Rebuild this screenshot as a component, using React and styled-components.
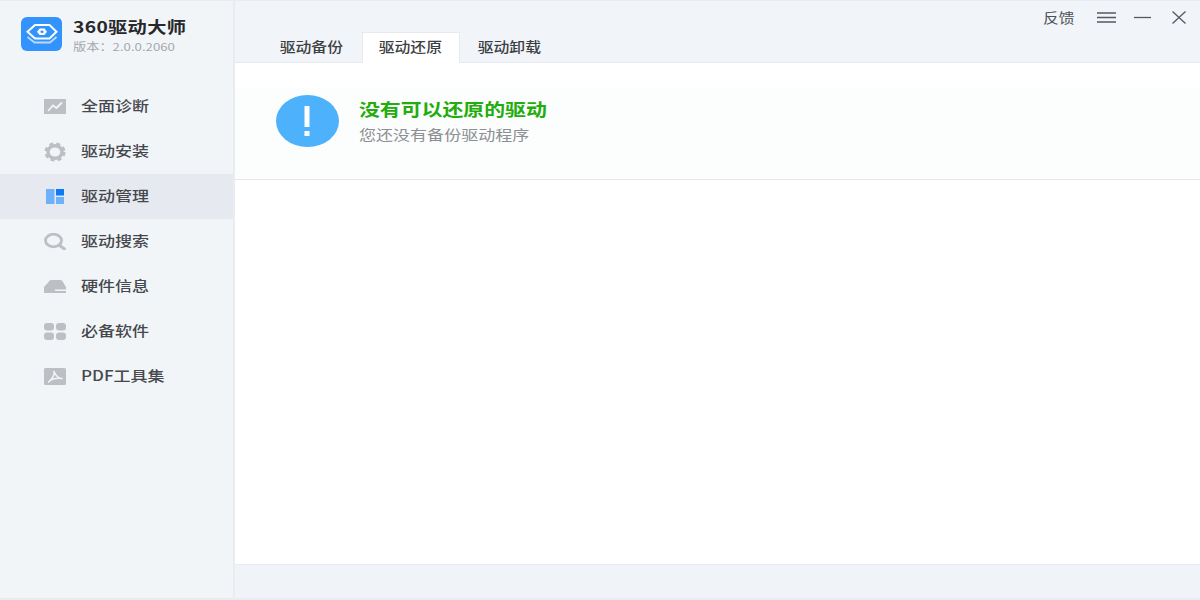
import React from "react";
import styled, { createGlobalStyle, css } from "styled-components";

const GlobalStyle = createGlobalStyle`
  * { box-sizing: border-box; }
  html, body { margin: 0; padding: 0; height: 100%; background: #ffffff; }
  body { font-family: "Noto Sans CJK SC", "Liberation Sans", sans-serif; overflow: hidden; }
`;

const menu = [
  { label: "全面诊断", icon: "chart" },
  { label: "驱动安装", icon: "gear" },
  { label: "驱动管理", icon: "panel", active: true },
  { label: "驱动搜索", icon: "search" },
  { label: "硬件信息", icon: "disk" },
  { label: "必备软件", icon: "apps" },
  { label: "PDF工具集", icon: "pdf" },
];

const tabs = [{ label: "驱动备份" }, { label: "驱动还原", active: true }, { label: "驱动卸载" }];

function MenuIcon({ name }) {
  const grey = "#bcc0c5";
  const bg = "#f2f5f8";
  if (name === "chart") {
    return (
      <svg width="22" height="15" viewBox="0 0 22 15">
        <rect width="22" height="15" fill={grey} />
        <path d="M4 12 L9 6.5 L12.5 9 L18 3.5" fill="none" stroke={bg} strokeWidth="1.8" />
      </svg>
    );
  }
  if (name === "gear") {
    return (
      <svg width="22" height="20" viewBox="0 0 22 20">
        <ellipse cx="11" cy="10" rx="7" ry="6.3" fill="none" stroke={grey} strokeWidth="3.4" />
        <ellipse
          cx="11"
          cy="10"
          rx="9.3"
          ry="8.3"
          fill="none"
          stroke={grey}
          strokeWidth="2.6"
          strokeDasharray="4 3.1"
        />
      </svg>
    );
  }
  if (name === "panel") {
    return (
      <svg width="18" height="15" viewBox="0 0 18 15">
        <rect x="0" y="0" width="8.5" height="15" fill="#6db1fb" />
        <rect x="10" y="0" width="8" height="6.5" fill="#0a7bf5" />
        <rect x="10" y="8" width="8" height="7" fill="#6db1fb" />
      </svg>
    );
  }
  if (name === "search") {
    return (
      <svg width="22" height="17" viewBox="0 0 22 17">
        <ellipse cx="9.5" cy="7.5" rx="8" ry="6.3" fill="none" stroke={grey} strokeWidth="2.8" />
        <path d="M15.5 12.5 L20.5 16" stroke={grey} strokeWidth="3" strokeLinecap="round" />
      </svg>
    );
  }
  if (name === "disk") {
    return (
      <svg width="22" height="13" viewBox="0 0 22 13">
        <path d="M7 0H16.5Q18 0 19 2L22 7V13H0V7L4.5 2Q5.5 0 7 0Z" fill={grey} />
        <rect x="11" y="9.5" width="11" height="1.5" fill={bg} />
      </svg>
    );
  }
  if (name === "apps") {
    return (
      <svg width="22" height="17" viewBox="0 0 22 17">
        <rect x="0" y="0" width="10" height="7.5" rx="3" fill={grey} />
        <rect x="12" y="0" width="10" height="7.5" rx="3" fill={grey} />
        <rect x="0" y="9.5" width="10" height="7.5" rx="3" fill={grey} />
        <rect x="12" y="9.5" width="10" height="7.5" rx="3" fill={grey} />
      </svg>
    );
  }
  return (
    <svg width="22" height="17" viewBox="0 0 22 17">
      <rect width="22" height="17" rx="1.5" fill={grey} />
      <path
        d="M10 3.5C11 6.5 8 11.5 4.5 14C7 11 13 9.5 18 10.5C14 10.5 11.5 7 10 3.5Z"
        fill="none"
        stroke={bg}
        strokeWidth="1.5"
        strokeLinejoin="round"
      />
    </svg>
  );
}

function LogoMark() {
  return (
    <svg width="41" height="34" viewBox="0 0 41 34">
      <rect width="41" height="34" rx="6" fill="#3193fb" />
      <path d="M14 8H28.5L35.5 14.7L28.5 21.5H14L6.5 14.7Z" fill="none" stroke="#ffffff" strokeWidth="2" />
      <path d="M18.5 11.5H23.5L26 14.7L23.5 18H18.5L16 14.7Z" fill="#ffffff" />
      <ellipse cx="21" cy="14.7" rx="1.6" ry="1.2" fill="#3193fb" />
      <path d="M6.5 20L13.5 25.5H29L35.5 20" fill="none" stroke="#b9dafd" strokeWidth="1.8" />
    </svg>
  );
}

export default function App() {
  return (
    <>
      <GlobalStyle />
      <Window>
        <Sidebar>
          <Brand>
            <LogoMark />
            <BrandText>
              <BrandName>360驱动大师</BrandName>
              <BrandVersion>版本：2.0.0.2060</BrandVersion>
            </BrandText>
          </Brand>
          <Menu>
            {menu.map((item) => (
              <MenuItem key={item.label} $active={item.active}>
                <IconSlot>
                  <MenuIcon name={item.icon} />
                </IconSlot>
                <MenuLabel>{item.label}</MenuLabel>
              </MenuItem>
            ))}
          </Menu>
        </Sidebar>
        <Main>
          <TopBar>
            <Tabs>
              {tabs.map((tab) => (
                <Tab key={tab.label} $active={tab.active}>
                  <TabLabel>{tab.label}</TabLabel>
                </Tab>
              ))}
            </Tabs>
            <WindowControls>
              <Feedback>反馈</Feedback>
              <svg width="19" height="11" viewBox="0 0 19 11">
                <path d="M0 1H19M0 5.5H19M0 10H19" stroke="#555a60" strokeWidth="1.3" />
              </svg>
              <svg width="17" height="11" viewBox="0 0 17 11">
                <path d="M0 5.5H17" stroke="#555a60" strokeWidth="1.3" />
              </svg>
              <svg width="14" height="13" viewBox="0 0 14 13">
                <path d="M0.5 0.5L13.5 12.5M13.5 0.5L0.5 12.5" stroke="#555a60" strokeWidth="1.3" />
              </svg>
            </WindowControls>
          </TopBar>
          <Content>
            <Banner>
              <svg width="63" height="52" viewBox="0 0 63 52">
                <ellipse cx="31.5" cy="26" rx="31.5" ry="26" fill="#4eb1fb" />
                <rect x="28.5" y="11" width="5" height="21" fill="#ffffff" />
                <rect x="28.5" y="36" width="5" height="5" fill="#ffffff" />
              </svg>
              <BannerText>
                <BannerTitle>没有可以还原的驱动</BannerTitle>
                <BannerSub>您还没有备份驱动程序</BannerSub>
              </BannerText>
            </Banner>
          </Content>
          <Footer />
        </Main>
      </Window>
    </>
  );
}

// the whole window in the picture is stretched sideways by about 1.2
const stretched = css`
  display: inline-block;
  width: max-content;
  transform: scaleX(1.2);
  transform-origin: left center;
`;

const Window = styled.div`
  display: flex;
  width: 1200px;
  height: 600px;
  background: #f1f4f8;
  border-bottom: 2px solid #e8ebef;
`;

const Sidebar = styled.aside`
  flex: 0 0 235px;
  background: #f2f5f8;
  border-top: 1px solid #e9ecf0;
  border-right: 2px solid #e9ecf0;
`;

const Brand = styled.div`
  display: flex;
  align-items: flex-start;
  gap: 11px;
  height: 83px;
  padding: 16px 0 0 21px;
`;

const BrandText = styled.div`
  display: flex;
  flex-direction: column;
`;

const BrandName = styled.div`
  ${stretched}
  margin-top: -1px;
  font-size: 16px;
  line-height: 20px;
  font-weight: 700;
  letter-spacing: 0.3px;
  color: #26282b;
`;

const BrandVersion = styled.div`
  ${stretched}
  margin-top: 2px;
  font-size: 11px;
  line-height: 16px;
  color: #a4a8ad;
`;

const Menu = styled.nav`
  display: flex;
  flex-direction: column;
`;

const MenuItem = styled.div`
  display: flex;
  align-items: center;
  height: 45px;
  padding-left: 44px;
  background: ${(p) => (p.$active ? "#e6e9f0" : "transparent")};
`;

const MenuLabel = styled.span`
  ${stretched}
  padding-bottom: 3px;
  font-size: 14.2px;
  font-weight: 500;
  color: #45484d;
`;

const IconSlot = styled.span`
  display: flex;
  align-items: center;
  justify-content: center;
  flex: 0 0 22px;
  margin-right: 15px;

  svg {
    display: block;
  }
`;

const Main = styled.main`
  display: flex;
  flex: 1;
  flex-direction: column;
  min-width: 0;
`;

const TopBar = styled.header`
  position: relative;
  display: flex;
  flex: 0 0 63px;
  align-items: flex-end;
  padding-left: 28px;
  background: #f1f4f8;
  border-top: 1px solid #e9ecf0;
  border-bottom: 1px solid #e7eaee;
`;

const Tabs = styled.div`
  display: flex;
  gap: 1px;
  margin-bottom: -1px;
`;

const Tab = styled.div`
  display: flex;
  align-items: center;
  justify-content: center;
  width: 98px;
  height: 31px;
  padding: 0 2px 3px 0;
  background: ${(p) => (p.$active ? "#ffffff" : "transparent")};
  border: 1px solid ${(p) => (p.$active ? "#e7eaee" : "transparent")};
  border-bottom: 0;
`;

const TabLabel = styled.span`
  ${stretched}
  transform-origin: center;
  font-size: 13.2px;
  font-weight: 500;
  color: #3b3e42;
`;

const WindowControls = styled.div`
  position: absolute;
  top: 8px;
  right: 14px;
  display: flex;
  align-items: center;
  gap: 18px;
  height: 17px;

  svg:last-child {
    margin-left: 3px;
  }
`;

const Feedback = styled.span`
  ${stretched}
  flex: 0 0 31px;
  margin-right: 5px;
  padding-bottom: 1px;
  font-size: 13.2px;
  color: #4e5257;
`;

const Content = styled.div`
  flex: 1;
  padding-top: 25px;
  background: #ffffff;
`;

const Banner = styled.section`
  display: flex;
  align-items: flex-start;
  gap: 20px;
  height: 92px;
  padding: 7px 0 0 41px;
  background: #fcfdfd;
  border-bottom: 1px solid #e6e8ea;
`;

const BannerText = styled.div`
  display: flex;
  flex-direction: column;
  align-items: flex-start;
  margin-top: 1px;
`;

const BannerTitle = styled.div`
  ${stretched}
  font-size: 17.4px;
  line-height: 26px;
  font-weight: 700;
  color: #22ad0c;
`;

const BannerSub = styled.div`
  ${stretched}
  font-size: 14.2px;
  line-height: 24px;
  color: #8c8f93;
`;

const Footer = styled.footer`
  flex: 0 0 34px;
  background: #f0f3f7;
  border-top: 1px solid #e6e9ee;
`;
